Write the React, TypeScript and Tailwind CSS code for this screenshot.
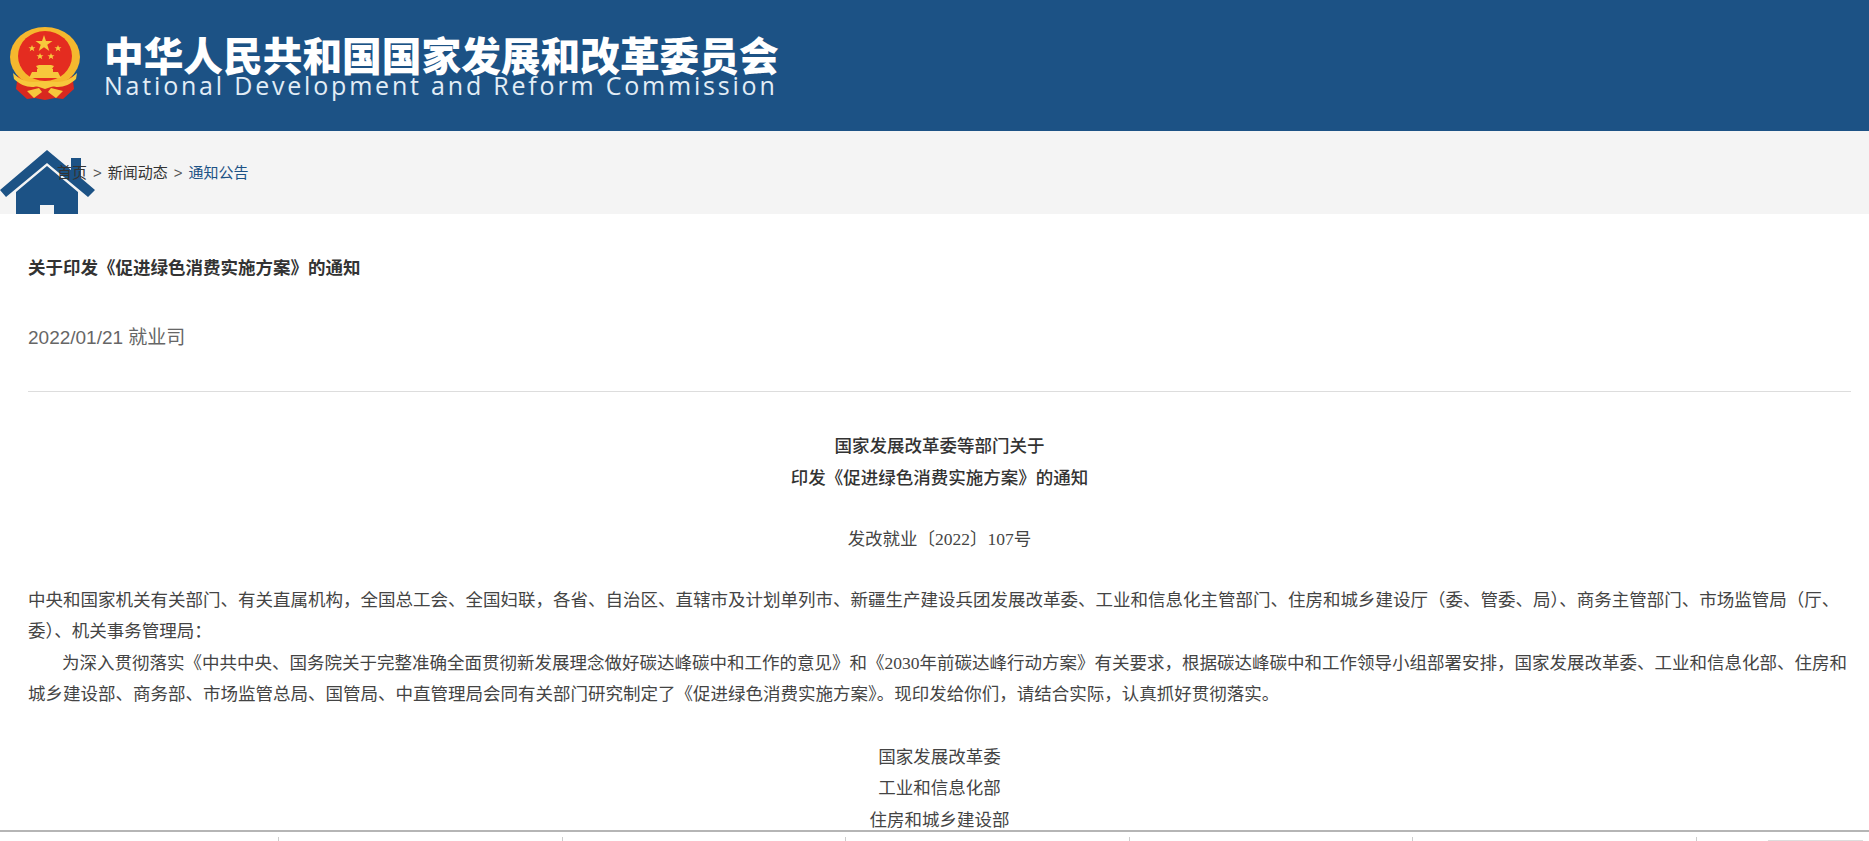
import React from 'react';

const bodyFont = '"Liberation Sans", "Noto Sans CJK SC", sans-serif';
const articleFont = '"Liberation Serif", "Noto Sans CJK SC", serif';

function Emblem() {
  return (
    <svg width="70" height="73" viewBox="0 0 70 73">
      <path d="M8 46h54l2 16-11 10-8-1-10 2-10-2-8 1L6 62z" fill="#d9281f" />
      <ellipse cx="35" cy="30" rx="35" ry="30" fill="#f5b82e" />
      <ellipse cx="35" cy="29" rx="27" ry="25" fill="#e42c20" />
      <path d="M34 8l2 6h6.500l-5.200 3.800 2 6.200-5.300-3.800-5.300 3.800 2-6.200-5.200-3.800H32z" fill="#f7c83c" />
      <path d="M22 18l1 2.200h2.500l-2 1.500.8 2.500-2.300-1.500-2.300 1.500.8-2.500-2-1.500H21zM48 18l1 2.200h2.500l-2 1.500.8 2.500-2.300-1.500-2.300 1.500.8-2.500-2-1.500H47zM30 26l1 2.200h2.500l-2 1.500.8 2.500-2.300-1.500-2.300 1.500.8-2.500-2-1.500H29zM41 26l1 2.200h2.500l-2 1.500.8 2.500-2.300-1.500-2.300 1.500.8-2.500-2-1.500H40z" fill="#f7c83c" />
      <path d="M26 39l3-1h12l3 1-2 3h1v3h5l3 6H19l3-6h5v-3h1z" fill="#f7c83c" />
      <path d="M3 46c6 6 13 9 20 9 5 0 8-1 12-1s7 1 12 1c7 0 14-3 20-9l-1 6c-5 5-12 8-18 8-3 0-5-1-7 0l-6 2-6-2c-2-1-4 0-7 0-6 0-13-3-18-8z" fill="#f7c83c" />
      <path d="M17 64l12-3 3 4-8 6zM53 64l-12-3-3 4 8 6z" fill="#f7c83c" />
    </svg>
  );
}

function HomeIcon() {
  return (
    <svg width="96" height="64" viewBox="0 0 96 64" className="blur-[0.7px]">
      <path d="M47 0l24 20V8h10v20l14 12-7 7L47 13 6 47l-6-7z" fill="#1c5285" />
      <path d="M47 16l31 26v22H54v-9H40v9H16V42z" fill="#1c5285" />
    </svg>
  );
}

export default function App() {
  return (
    <div className="w-[1869px] h-[841px] overflow-hidden flex flex-col bg-white" style={{ fontFamily: bodyFont }}>
      <header className="h-[131px] shrink-0 bg-[#1c5285] flex items-start pl-[10px] pt-[27px] gap-[24px]">
        <Emblem />
        <div className="pt-[7px]">
          <div className="text-white font-black text-[39.700px] leading-[40px] whitespace-nowrap" style={{ fontFamily: '"Noto Sans CJK SC", sans-serif' }}>
            中华人民共和国国家发展和改革委员会
          </div>
          <div className="text-[#e2edf6] text-[25px] leading-[22px] tracking-[2.800px] whitespace-nowrap" style={{ fontFamily: '"Open Sans", sans-serif' }}>
            National Development and Reform Commission
          </div>
        </div>
      </header>

      <nav className="relative h-[83px] shrink-0 bg-[#f4f4f4] flex items-center pl-[57px] pt-[1px] text-[15px] text-[#333]">
        <div className="absolute left-0 bottom-0">
          <HomeIcon />
        </div>
        <span className="relative">首页</span>
        <span className="relative mx-[6px] text-[#555]">&gt;</span>
        <span className="relative">新闻动态</span>
        <span className="relative mx-[6px] text-[#555]">&gt;</span>
        <span className="relative text-[#1c5285]">通知公告</span>
      </nav>

      <main className="flex-1 min-h-0 overflow-hidden pl-[28px] pr-[18px]">
        <h1 className="mt-[42px] text-[17.500px] leading-[24px] font-bold text-[#333] whitespace-nowrap">关于印发《促进绿色消费实施方案》的通知</h1>
        <div className="mt-[45px] text-[19px] leading-[26px] text-[#666]">2022/01/21 就业司</div>
        <div className="mt-[40px] h-px bg-[#dddddd]" />

        <div className="mt-[39px] text-[17.500px] leading-[31.500px] text-[#444]" style={{ fontFamily: articleFont }}>
          <div className="text-center font-medium text-[#333]">国家发展改革委等部门关于</div>
          <div className="text-center font-medium text-[#333]">印发《促进绿色消费实施方案》的通知</div>
          <div className="mt-[30px] text-center">发改就业〔2022〕107号</div>
          <p className="mt-[29px]">
            中央和国家机关有关部门、有关直属机构，全国总工会、全国妇联，各省、自治区、直辖市及计划单列市、新疆生产建设兵团发展改革委、工业和信息化主管部门、住房和城乡建设厅（委、管委、局）、商务主管部门、市场监管局（厅、委）、机关事务管理局：
          </p>
          <p className="indent-[34px]">
            为深入贯彻落实《中共中央、国务院关于完整准确全面贯彻新发展理念做好碳达峰碳中和工作的意见》和《2030年前碳达峰行动方案》有关要求，根据碳达峰碳中和工作领导小组部署安排，国家发展改革委、工业和信息化部、住房和城乡建设部、商务部、市场监管总局、国管局、中直管理局会同有关部门研究制定了《促进绿色消费实施方案》。现印发给你们，请结合实际，认真抓好贯彻落实。
          </p>
          <div className="mt-[31px] text-center">国家发展改革委</div>
          <div className="text-center">工业和信息化部</div>
          <div className="text-center">住房和城乡建设部</div>
        </div>
      </main>

      <footer className="relative h-[11px] shrink-0 border-t-2 border-[#b5b5b5] bg-white flex items-end pl-[278px] overflow-hidden">
        {[0, 1, 2, 3, 4, 5].map(i => (
          <div key={i} className="w-[283.600px] h-[4px] shrink-0">
            <div className="w-px h-full bg-[#cccccc]" />
          </div>
        ))}
        <div className="absolute left-[1768px] bottom-0 w-[95px] h-px bg-[#dddddd]" />
      </footer>
    </div>
  );
}
